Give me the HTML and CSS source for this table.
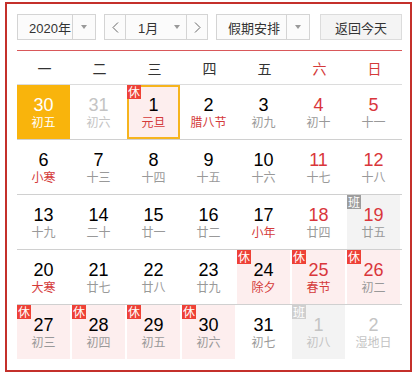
FILE: index.html
```html
<!DOCTYPE html>
<html lang="zh-CN">
<head>
<meta charset="utf-8">
<link rel="stylesheet" href="styles.css">
</head>
<body>
<div class="cal">
  <div class="toolbar">
    <div class="sel sel-year">
      <span class="sel-text">2020年</span>
      <span class="sel-arrow"><i class="tri"></i></span>
    </div>
    <div class="sel sel-month">
      <span class="nav"><svg width="7" height="11" viewBox="0 0 7 11"><polyline points="6,0.5 1,5.5 6,10.5" fill="none" stroke="#666" stroke-width="1"/></svg></span>
      <span class="month-mid"><span class="month-text">1月</span><i class="tri"></i></span>
      <span class="nav nav-next"><svg width="7" height="11" viewBox="0 0 7 11"><polyline points="1,0.5 6,5.5 1,10.5" fill="none" stroke="#666" stroke-width="1"/></svg></span>
    </div>
    <div class="sel sel-holiday">
      <span class="sel-text">假期安排</span>
      <span class="sel-arrow"><i class="tri"></i></span>
    </div>
    <div class="btn-today">返回今天</div>
  </div>

  <div class="week">
    <span>一</span><span>二</span><span>三</span><span>四</span><span>五</span><span class="we">六</span><span class="we">日</span>
  </div>

  <div class="row">
    <div class="cell selected"><b>30</b><em>初五</em></div>
    <div class="cell other"><b>31</b><em>初六</em></div>
    <div class="cell rest today"><i class="badge">休</i><b>1</b><em class="fest">元旦</em></div>
    <div class="cell"><b>2</b><em class="fest">腊八节</em></div>
    <div class="cell"><b>3</b><em>初九</em></div>
    <div class="cell wk"><b>4</b><em>初十</em></div>
    <div class="cell wk"><b>5</b><em>十一</em></div>
  </div>
  <div class="row">
    <div class="cell"><b>6</b><em class="fest">小寒</em></div>
    <div class="cell"><b>7</b><em>十三</em></div>
    <div class="cell"><b>8</b><em>十四</em></div>
    <div class="cell"><b>9</b><em>十五</em></div>
    <div class="cell"><b>10</b><em>十六</em></div>
    <div class="cell wk"><b>11</b><em>十七</em></div>
    <div class="cell wk"><b>12</b><em>十八</em></div>
  </div>
  <div class="row">
    <div class="cell"><b>13</b><em>十九</em></div>
    <div class="cell"><b>14</b><em>二十</em></div>
    <div class="cell"><b>15</b><em>廿一</em></div>
    <div class="cell"><b>16</b><em>廿二</em></div>
    <div class="cell"><b>17</b><em class="fest">小年</em></div>
    <div class="cell wk"><b>18</b><em>廿四</em></div>
    <div class="cell wk work"><i class="badge badge-work">班</i><b>19</b><em>廿五</em></div>
  </div>
  <div class="row">
    <div class="cell"><b>20</b><em class="fest">大寒</em></div>
    <div class="cell"><b>21</b><em>廿七</em></div>
    <div class="cell"><b>22</b><em>廿八</em></div>
    <div class="cell"><b>23</b><em>廿九</em></div>
    <div class="cell rest"><i class="badge">休</i><b>24</b><em class="fest">除夕</em></div>
    <div class="cell rest wk"><i class="badge">休</i><b>25</b><em class="fest">春节</em></div>
    <div class="cell rest wk"><i class="badge">休</i><b>26</b><em>初二</em></div>
  </div>
  <div class="row last">
    <div class="cell rest"><i class="badge">休</i><b>27</b><em>初三</em></div>
    <div class="cell rest"><i class="badge">休</i><b>28</b><em>初四</em></div>
    <div class="cell rest"><i class="badge">休</i><b>29</b><em>初五</em></div>
    <div class="cell rest"><i class="badge">休</i><b>30</b><em>初六</em></div>
    <div class="cell"><b>31</b><em>初七</em></div>
    <div class="cell other work"><i class="badge badge-work">班</i><b>1</b><em>初八</em></div>
    <div class="cell other"><b>2</b><em>湿地日</em></div>
  </div>
</div>
</body>
</html>
```
FILE: styles.css
```css
* { box-sizing: border-box; }
html, body { margin: 0; padding: 0; background: #fff; }
body {
  font-family: "Liberation Sans", Arial, "Noto Sans CJK SC", sans-serif;
  color: #333;
}
.cal {
  margin: 2px 0 0 5px;
  width: 407px;
  border: 2px solid #c4302b;
  padding: 10px 8px 11px 10px;
}
.toolbar {
  display: flex;
  height: 37px;
  padding-bottom: 10px;
  border-bottom: 1px solid #d9585a;
}
.sel {
  display: flex;
  height: 26px;
  border: 1px solid #d4d4d4;
  background: #fbfbfb;
  font-size: 13px;
  color: #333;
  align-items: stretch;
}
.sel-text {
  display: flex;
  align-items: center;
  padding-left: 11px;
  border-right: 1px solid #d4d4d4;
}
.sel-arrow {
  display: flex;
  align-items: center;
  justify-content: center;
  width: 22px;
}
.tri {
  display: block;
  width: 0; height: 0;
  border-left: 3.5px solid transparent;
  border-right: 3.5px solid transparent;
  border-top: 4px solid #999;
}
.sel-year { width: 79px; }
.sel-year .sel-text { width: 56px; }
.sel-month { width: 104px; margin-left: 8px; }
.nav {
  width: 21px;
  display: flex;
  align-items: center;
  justify-content: center;
  border-right: 1px solid #d4d4d4;
}
.nav-next { border-right: none; border-left: 1px solid #d4d4d4; }
.month-mid {
  flex: 1;
  display: flex;
  align-items: center;
  padding-left: 12px;
}
.month-text { width: 36px; }
.sel-holiday { width: 94px; margin-left: 8px; }
.sel-holiday .sel-text { width: 71px; }
.btn-today {
  margin-left: 10px;
  width: 82px;
  height: 26px;
  border: 1px solid #dcdcdc;
  background: #f4f4f4;
  font-size: 13px;
  color: #333;
  display: flex;
  align-items: center;
  justify-content: center;
}
.week, .row {
  display: grid;
  grid-template-columns: repeat(7, 53px);
  column-gap: 2px;
}
.week {
  height: 34px;
  border-bottom: 1px solid #dcdcdc;
  font-size: 14px;
  align-items: center;
  color: #333;
}
.week span { text-align: center; padding-left: 2px; }
.week .we { color: #d43a3a; }
.row {
  height: 55px;
  border-bottom: 1px solid #d0d0d0;
}
.row.last { border-bottom: none; height: 54px; }
.cell {
  position: relative;
  text-align: center;
  padding-top: 10px;
}
.cell b {
  display: block;
  font-weight: normal;
  font-size: 18px;
  line-height: 20px;
  color: #000;
}
.cell em {
  display: block;
  font-style: normal;
  font-size: 12px;
  line-height: 17px;
  color: #999;
}
.cell em.fest { color: #d43a3a; }
.cell.wk b { color: #d9363b; }
.cell.rest { background: #fdeeee; }
.cell.work { background: #f3f3f3; }
.cell.selected { background: #f9b40c; }
.cell.selected b, .cell.selected em { color: #fff; }
.cell.today { box-shadow: inset 0 0 0 2px #f6b41e; }
.cell.other b, .cell.other em { color: #c4c4c4; }
.badge {
  position: absolute;
  left: 0; top: 0;
  width: 14px; height: 14px;
  background: #ee4136;
  color: #fff;
  font-style: normal;
  font-size: 12px;
  line-height: 14px;
  text-align: center;
  font-family: "Noto Sans CJK SC", sans-serif;
}
.badge-work { background: #9d9d9d; }
.other .badge-work { background: #cfcfcf; }
```
